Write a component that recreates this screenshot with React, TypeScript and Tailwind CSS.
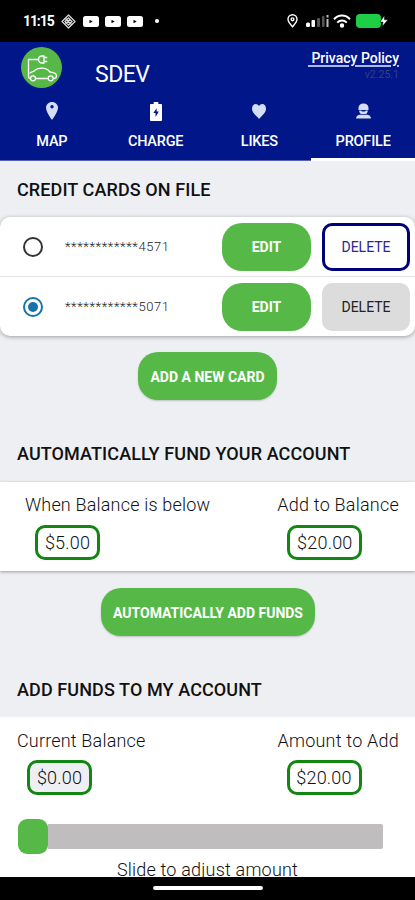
import React from 'react';

interface Card {
  id: number;
  last4: string;
  selected: boolean;
}

const cards: Card[] = [
  { id: 1, last4: '4571', selected: false },
  { id: 2, last4: '5071', selected: true },
];

const PinIcon = () => (
  <svg width="12" height="18" viewBox="0 0 12 18" fill="#d5dcf6">
    <path fillRule="evenodd" d="M6 0C2.700 0 0 2.500 0 5.800 0 10 6 18 6 18s6-8 6-12.200C12 2.500 9.300 0 6 0zm0 6.500a1.700 1.700 0 1 1 0-3.400 1.700 1.700 0 0 1 0 3.400z" />
  </svg>
);

const BatteryIcon = () => (
  <svg width="12" height="19" viewBox="0 0 13 20" preserveAspectRatio="none">
    <path d="M4 0h5v2h3q1 0 1 1v16q0 1-1 1H1q-1 0-1-1V3q0-1 1-1h3z" fill="#fff" />
    <path d="M7.200 6.500L3.600 11.500H6v4.200L9.600 10H7.200z" fill="#001689" />
  </svg>
);

const HeartIcon = () => (
  <svg width="14" height="15" viewBox="0 0 14 16" preserveAspectRatio="none" fill="#d5dcf6">
    <path d="M7 16C4.500 12.800 0 9.500 0 5 0 2 1.700 0 3.800 0 5.300 0 6.500 1 7 2.400 7.500 1 8.700 0 10.200 0 12.300 0 14 2 14 5c0 4.500-4.500 7.800-7 11z" />
  </svg>
);

const ProfileIcon = () => (
  <svg width="15" height="16" viewBox="0 0 15 16" fill="#d5dcf6">
    <path d="M7.500 0.500c3.200 0 5 1.900 5 4.500v2h-10V5c0-2.600 1.800-4.500 5-4.500z" />
    <path d="M3.200 7.600h2l.8.900h3l.8-.9h2c0 1.700-.7 2.700-1.600 3.400H4.800C3.900 10.300 3.200 9.300 3.200 7.600z" />
    <path d="M0 15.500c.2-2 1.300-3.300 3.500-3.800h8c2.200.5 3.300 1.800 3.500 3.800z" />
  </svg>
);

const tabs = [
  { label: 'MAP', icon: PinIcon, active: false },
  { label: 'CHARGE', icon: BatteryIcon, active: false },
  { label: 'LIKES', icon: HeartIcon, active: false },
  { label: 'PROFILE', icon: ProfileIcon, active: true },
];

const Logo = () => (
  <svg width="41" height="41" viewBox="0 0 41 41" fill="none" stroke="#fff" strokeWidth="1.300" strokeLinecap="round" strokeLinejoin="round">
    <circle cx="20.500" cy="20.500" r="20.500" fill="#56b947" stroke="none" />
    <path d="M17.500 12.500H7.500V30q0 1.500 2 1.500" />
    <path d="M23 9h-1.500c-2.400 0-4 1.300-4 3.500s1.600 3.500 4 3.500H23zM23 10.500h2.700M23 14.500h2.700" />
    <path d="M14.500 31.500H27M32.500 31.500c2.300 0 3-.8 3-2.500 0-2.700-2-3.300-6.500-4-2-2.500-4-3.800-8-3.800s-6 .8-8.500 3.300c-1 .3-2.500.5-3.500 1.500" />
    <circle cx="12" cy="31.300" r="2.500" />
    <circle cx="29.700" cy="31.300" r="2.500" />
  </svg>
);

const VideoIcon = () => (
  <svg width="16" height="11" viewBox="0 0 16 11">
    <rect width="16" height="11" rx="2.500" fill="#fff" />
    <path d="M6.500 3.700v3.600L9.700 5.500z" fill="#000" />
  </svg>
);

const StatusBar = () => (
  <div className="flex h-[42px] items-center justify-between bg-black pl-[23px] pr-[27px] text-white">
    <div className="flex items-center">
      <span className="w-[31px] whitespace-nowrap text-[14px] font-bold leading-none tracking-[-1.1px]">11:15</span>
      <svg className="ml-[7px]" width="15" height="15" viewBox="0 0 15 15" fill="none" stroke="#d5d5d5" strokeWidth="1.300">
        <path d="M7.500 1L14 7.500 7.500 14 1 7.500z" strokeLinejoin="round" />
        <path d="M4 7.500L7.500 4 11 7.500 7.500 11zM4 4l7 7M4.500 10l5-5" />
      </svg>
      <div className="ml-[7px] flex gap-1.5">
        <VideoIcon />
        <VideoIcon />
        <VideoIcon />
      </div>
      <div className="ml-3 size-1 rounded-full bg-white" />
    </div>
    <div className="flex items-center">
      <svg width="11" height="14" viewBox="0 0 11 14" fill="none" stroke="#fff" strokeWidth="1.400">
        <path d="M5.500 12.800C3.500 10.500 1 8 1 5.300a4.500 4.500 0 0 1 9 0c0 2.700-2.500 5.200-4.500 7.500z" />
        <circle cx="5.500" cy="5.300" r="1.400" />
      </svg>
      <svg className="ml-2" width="24" height="14" viewBox="0 0 24 14">
        <rect x="0" y="8.500" width="4" height="4.500" rx="1.500" fill="#fff" />
        <rect x="5.500" y="6" width="3.500" height="7" rx="1" fill="#fff" />
        <rect x="11" y="4" width="3" height="9" rx="1" fill="#555" />
        <rect x="16" y="2" width="2.500" height="11" rx="1" fill="#555" />
        <rect x="20.500" y="1" width="2" height="2.500" fill="#bbb" />
        <rect x="20.500" y="5" width="2" height="8" fill="#bbb" />
      </svg>
      <svg className="ml-[3px]" width="18" height="14" viewBox="0 0 18 14" fill="none" stroke="#fff" strokeWidth="2">
        <path d="M1 5.200C5.500.3 12.500.3 17 5.200M4.200 8.600c2.800-2.800 6.800-2.800 9.600 0" />
        <circle cx="9" cy="11.500" r="1.200" fill="#fff" />
      </svg>
      <svg className="ml-[5px]" width="32" height="14" viewBox="0 0 32 14">
        <rect width="25" height="14" rx="4" fill="#1fce47" />
        <path d="M28.500 1.500L24 8h3l-.8 4.500L32 5.800h-3.500z" fill="#fff" stroke="#000" strokeWidth=".5" />
      </svg>
    </div>
  </div>
);

const Header = () => (
  <header className="h-[118px] bg-[#001689] text-white">
    <div className="flex h-[56px] justify-between pl-[21px] pr-4">
      <div className="flex">
        <div className="mt-[5px]">
          <Logo />
        </div>
        <h1 className="ml-[33px] mt-[19px] text-[23px] leading-7 tracking-[-0.5px]">SDEV</h1>
      </div>
      <div className="text-right">
        <a className="mt-[7px] block whitespace-pre text-[14px] font-medium leading-[18px] underline decoration-[#aeb8e2] decoration-2 underline-offset-2"> Privacy Policy</a>
        <p className="mt-px text-[10.5px] leading-[14px] text-[#343f80]">v2.25.1</p>
      </div>
    </div>
    <nav className="grid grid-cols-4">
      {tabs.map((tab) => {
        const Icon = tab.icon;
        return (
          <div
            key={tab.label}
            className={`flex h-[63px] flex-col items-center ${tab.active ? 'border-b-[3px] border-white' : 'border-b border-[#5a5fae]'}`}
          >
            <div className="flex h-[26px] items-center">
              <Icon />
            </div>
            <span className="mt-[7px] text-[14.5px] font-medium leading-[21px] tracking-[-0.2px]">{tab.label}</span>
          </div>
        );
      })}
    </nav>
  </header>
);

const GreenButton = ({ label, className }: { label: string; className: string }) => (
  <button className={`h-[48px] shrink-0 whitespace-nowrap bg-[#56b947] pt-0.5 text-[14px] font-bold text-white ${className}`}>
    {label}
  </button>
);

const AmountBox = ({ value, className }: { value: string; className: string }) => (
  <div className={`flex h-[35px] items-center justify-center rounded-[10px] border-[3px] border-[#138512] text-[18px] font-light tracking-[0.2px] ${className}`}>
    {value}
  </div>
);

const App: React.FC = () => {
  return (
    <div className="flex h-[900px] w-[415px] flex-col overflow-hidden bg-[#edeff3] font-['Roboto',sans-serif] text-[#111]">
      <StatusBar />
      <Header />

      <main className="min-h-0 flex-1 overflow-hidden">
        {/* Credit cards */}
        <h2 className="h-[57px] pl-[17px] pt-[18px] text-[18px] font-medium leading-6 tracking-[0.1px]">CREDIT CARDS ON FILE</h2>
        <div className="rounded-[10px] bg-white shadow-[0_1px_4px_rgba(0,0,0,0.35)]">
          {cards.map((card) => (
            <div key={card.id} className="flex h-[60px] items-center border-b border-[#e2e2e2] pl-[23px] pr-1 last:h-[59px] last:border-0">
              <div className={`flex size-5 items-center justify-center rounded-full border-2 ${card.selected ? 'border-[#1673ac]' : 'border-[#333]'}`}>
                {card.selected && <div className="size-2.5 rounded-full bg-[#1673ac]" />}
              </div>
              <span className="ml-[22px] w-[157px] whitespace-nowrap pt-px text-[13px] font-light tracking-[0.6px] text-[#222]">
                ************{card.last4}
              </span>
              <GreenButton label="EDIT" className="w-[89px] rounded-[20px]" />
              <button
                className={`ml-[11px] h-[48px] w-[88px] shrink-0 rounded-[10px] pt-px text-[14px] ${card.selected ? 'bg-[#dcdcdc] text-[#222]' : 'border-[3px] border-[#000078] bg-white text-[#29298f]'}`}
              >
                DELETE
              </button>
            </div>
          ))}
        </div>
        <div className="flex justify-center pt-4">
          <GreenButton label="ADD A NEW CARD" className="w-[139px] rounded-[20px] shadow-[0_1px_2px_rgba(0,0,0,0.2)]" />
        </div>

        {/* Automatic funding */}
        <h2 className="mt-[42px] h-[40px] pl-[17px] text-[18px] font-medium leading-6 tracking-[0.1px]">AUTOMATICALLY FUND YOUR ACCOUNT</h2>
        <div className="flex h-[89px] justify-between bg-white pl-[25px] pr-4 pt-[11px] shadow-[0_1px_3px_rgba(0,0,0,0.35)]">
          <div>
            <p className="text-[18px] font-light leading-6 tracking-[0.18px]">When Balance is below</p>
            <AmountBox value="$5.00" className="ml-2.5 mt-2 w-[65px]" />
          </div>
          <div>
            <p className="text-[18px] font-light leading-6 tracking-[0.22px]">Add to Balance</p>
            <AmountBox value="$20.00" className="ml-2.5 mt-2 w-[75px]" />
          </div>
        </div>
        <div className="flex justify-center pl-px pt-[17px]">
          <GreenButton label="AUTOMATICALLY ADD FUNDS" className="w-[214px] rounded-[20px] shadow-[0_1px_2px_rgba(0,0,0,0.2)]" />
        </div>

        {/* Manual funding */}
        <h2 className="mt-[42px] h-[39px] pl-[17px] text-[18px] font-medium leading-6 tracking-[0.1px]">ADD FUNDS TO MY ACCOUNT</h2>
        <div className="bg-white pt-3">
          <div className="flex justify-between pl-[17px] pr-4">
            <div>
              <p className="text-[18px] font-light leading-6 tracking-[0.18px]">Current Balance</p>
              <AmountBox value="$0.00" className="ml-2.5 mt-[7px] w-[65px] bg-[#edeff3]" />
            </div>
            <div>
              <p className="text-[18px] font-light leading-6 tracking-[0.22px]">Amount to Add</p>
              <AmountBox value="$20.00" className="ml-[9px] mt-[7px] w-[75px]" />
            </div>
          </div>
          <div className="mt-6 flex items-center pl-[18px]">
            <div className="h-[35px] w-[30px] rounded-[9px] bg-[#56b947]" />
            <div className="h-[25px] w-[335px] rounded-r-[2px] bg-[#c0bdbe]" />
          </div>
          <p className="mt-1 text-center text-[18px] font-light leading-6 tracking-[0.2px]">Slide to adjust amount</p>
        </div>
      </main>

      {/* Gesture bar */}
      <div className="h-[23px] bg-black pt-[9px]">
        <div className="mx-auto h-1 w-[110px] rounded-full bg-white" />
      </div>
    </div>
  );
};

export default App;
